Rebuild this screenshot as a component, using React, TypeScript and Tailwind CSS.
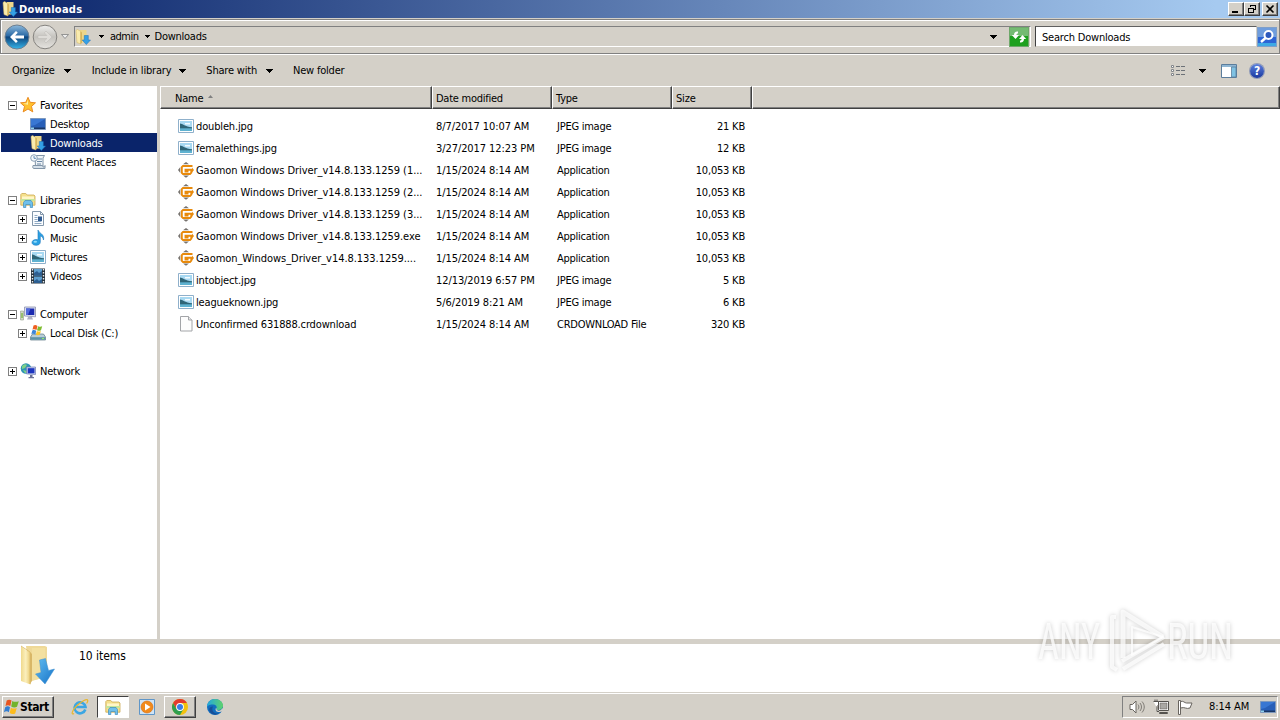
import type { ReactNode } from "react";

interface IconProps {
  className?: string;
}

function DownloadFolderIcon({ className = "w-4 h-4" }: IconProps) {
  return (
    <svg viewBox="0 0 16 16" className={className}>
      <path d="M5 1h6.500v12.500H5z" fill="#edd68a" />
      <path d="M1 1.500 2.500.5 6 2.600V15L2 13.600z" fill="#f9ebae" stroke="#dbb95c" strokeWidth=".5" />
      <path d="M5.400 2.600V15l1.400-1.200V3.400z" fill="#d4ae52" />
      <path d="M9.300 6.500h4v4.500h2.200L11.300 15.600 7.200 11h2.100z" fill="#35a0e6" stroke="#1b6fb5" strokeWidth=".5" />
    </svg>
  );
}

function LargeFolderIcon({ className }: IconProps) {
  return (
    <svg viewBox="0 0 36 44" className={className}>
      <defs>
        <linearGradient id="lf" x1="0" x2="1">
          <stop offset="0" stopColor="#f0d98c" />
          <stop offset=".5" stopColor="#fbefbd" />
          <stop offset="1" stopColor="#e9cb72" />
        </linearGradient>
        <linearGradient id="la" x1="0" x2="1" y2="1">
          <stop offset="0" stopColor="#63bdf0" />
          <stop offset="1" stopColor="#1472c8" />
        </linearGradient>
      </defs>
      <path d="M6 2h19l2 1v30l-17 4z" fill="#efd998" />
      <path d="M12 4h13v29l-13 4z" fill="#f3e0a0" />
      <path d="m1 2 8 7 1.500 31.500L1 37z" fill="url(#lf)" />
      <path d="m1 2 9 6v32" fill="none" stroke="#d8b662" strokeWidth=".8" />
      <path d="M10 8v32l2-3V10z" fill="#d9b767" />
      <path d="m19.500 16 6-1.500 3 12 6-1.500-9.500 15-9.500-10 5.500-1.500z" fill="url(#la)" stroke="#3c8fd0" strokeWidth=".5" />
    </svg>
  );
}

function BackIcon() {
  return (
    <svg viewBox="0 0 26 26" className="w-[26px] h-[26px]">
      <defs>
        <linearGradient id="bk" x2="0" y2="1">
          <stop offset="0" stopColor="#8db9dc" />
          <stop offset=".45" stopColor="#2b6aa5" />
          <stop offset=".5" stopColor="#0e447c" />
          <stop offset="1" stopColor="#35b5ea" />
        </linearGradient>
      </defs>
      <circle cx="13" cy="13" r="12" fill="url(#bk)" stroke="#6d7f90" />
      <path d="m6 13 6-6 1.800 1.800-2.700 2.700H20v3h-8.900l2.700 2.700L12 19z" fill="#fff" />
    </svg>
  );
}

function ForwardIcon() {
  return (
    <svg viewBox="0 0 26 26" className="w-[26px] h-[26px]">
      <defs>
        <linearGradient id="fw" x2="0" y2="1">
          <stop offset="0" stopColor="#efefed" />
          <stop offset=".5" stopColor="#c4c2bd" />
          <stop offset="1" stopColor="#e6e4e0" />
        </linearGradient>
      </defs>
      <circle cx="13" cy="13" r="11.800" fill="url(#fw)" stroke="#85837f" />
      <path d="m20 13-6-6-1.800 1.800 2.700 2.700H6v3h8.900l-2.700 2.700L14 19z" fill="#dedcd8" stroke="#bbb9b4" strokeWidth=".5" />
    </svg>
  );
}

function RefreshIcon() {
  return (
    <svg viewBox="0 0 20 20" className="w-5 h-5">
      <path d="M0 0h20v20H0z" fill="#6da86a" />
      <path d="M1 1h18v8H1z" fill="#74bb72" />
      <path d="M1 9h18v10H1z" fill="#1fa01f" />
      <path d="M9 4.500C6.500 4.200 5 5.500 5 8H2.800l3.700 4L10 8H7.500c0-1.200.5-1.600 1.500-1.600zM11 15.500c2.500.3 4-1 4-3.500h2.200l-3.700-4L10 12h2.500c0 1.200-.5 1.600-1.500 1.600z" fill="#fff" />
    </svg>
  );
}

function SearchIcon() {
  return (
    <svg viewBox="0 0 20 20" className="w-5 h-5">
      <path d="M0 0h20v20H0z" fill="#7f9fc9" />
      <path d="M1 1h18v9H1z" fill="#6f9ddd" />
      <path d="M1 10h18v9H1z" fill="#2d64d5" />
      <path d="M1 16h18v3H1z" fill="#3fa9e4" />
      <circle cx="11.500" cy="8" r="4" fill="#2d59bd" stroke="#fff" strokeWidth="2" />
      <path d="m8.500 11-4.500 4" stroke="#fff" strokeWidth="2.500" />
    </svg>
  );
}

function StarIcon() {
  return (
    <svg viewBox="0 0 16 16" className="w-4 h-4">
      <path d="m8 .3 2.200 5 5.300.5-4 3.600 1.300 5.500L8 12l-4.800 2.900 1.300-5.500-4-3.600 5.300-.5z" fill="#ffc02e" stroke="#e8851b" strokeWidth=".9" />
      <path d="M8 2.700 6.700 6.300 3 6.700l5 1z" fill="#fff0a6" />
    </svg>
  );
}

function DesktopIcon() {
  return (
    <svg viewBox="0 0 16 16" className="w-4 h-4">
      <path d="M.5 2.500h15v11H.5z" fill="#285fb8" stroke="#7d98bd" />
      <path d="M1 3h14L5 9 1 10z" fill="#3977d3" />
      <path d="M1 11.500h14V13H1z" fill="#183665" />
      <path d="M1 11.500h3V13H1z" fill="#8fd0ee" />
    </svg>
  );
}

function RecentIcon() {
  return (
    <svg viewBox="0 0 16 16" className="w-4 h-4">
      <path d="M5 1.500h9.500L13 4v9H5.500z" fill="#eef3f7" stroke="#8295a8" />
      <path d="M7 5h5M7 7.500h5M7 10h4" stroke="#6d89a6" />
      <path d="M3 11.500h9.500c0 2 2.500 2 2.500 0v3H4c-1.500 0-1.500-2-1-3z" fill="#d6e0e9" stroke="#8295a8" />
      <circle cx="4" cy="4" r="3.300" fill="#f5f8fb" stroke="#8ca1b6" />
      <path d="M4 2v2.300h2" fill="none" stroke="#3f74a6" strokeWidth=".8" />
    </svg>
  );
}

function LibraryIcon({ className = "w-4 h-4" }: IconProps) {
  return (
    <svg viewBox="0 0 16 16" className={className}>
      <path d="M.8 13.200V2.500l1-1h4l1.400 1.500H14l1 1v9.200z" fill="#f5e08c" stroke="#cdab55" strokeWidth=".8" />
      <path d="M2 4.500h12v3H2z" fill="#fff6c8" />
      <path d="M1 7h14v2H1z" fill="#c5e59a" />
      <path d="M3.500 15.500v-5l1.500-2h6l1.500 2v5h-2.300v-3H5.800v3z" fill="#6fc0ec" stroke="#3f8dbf" strokeWidth=".7" />
    </svg>
  );
}

function DocumentIcon() {
  return (
    <svg viewBox="0 0 16 16" className="w-4 h-4">
      <path d="M2.500.5h8l3 3v11h-11z" fill="#fbfdff" stroke="#8397ab" />
      <path d="M10.500.5v3h3" fill="none" stroke="#8397ab" />
      <path d="M4.500 4.500h3M4.500 6.500h3M4.500 8.500h3M4.500 10.500h7M4.500 12.500h7" stroke="#8fa9c3" />
      <path d="M8 5.500h4V10H8z" fill="#305b91" />
    </svg>
  );
}

function MusicIcon() {
  return (
    <svg viewBox="0 0 16 16" className="w-4 h-4">
      <path d="M8 0c.5 3 7 4 5.500 10C13 7 11.500 6 10.300 6v6c0 2-1.700 3.300-4.200 3.300S2 14.200 2 12.500s1.800-3 4-3c.8 0 1.400.2 2 .4z" fill="#2ca1e3" stroke="#1d78bd" strokeWidth=".6" />
      <ellipse cx="5.300" cy="11.700" rx="1.800" ry="1" fill="#91dcfa" />
    </svg>
  );
}

function PictureIcon() {
  return (
    <svg viewBox="0 0 16 16" className="w-4 h-4">
      <path d="M.5 1.500h15v13H.5z" fill="#fff" stroke="#8fb0cb" />
      <path d="M2 3h12v10H2z" fill="#a8d9f2" />
      <path d="M2 5.500c2.500 0 5 3.200 12 3.800V11H2z" fill="#2f6577" />
      <path d="M2 10.300h12V13H2z" fill="#5fb2d0" />
      <path d="M7 5h5v1.500H7z" fill="#f3fbff" />
    </svg>
  );
}

function VideoIcon() {
  return (
    <svg viewBox="0 0 16 16" className="w-4 h-4">
      <path d="M1 .5h14v15H1z" fill="#26323c" />
      <path d="M4 1h8v6.500H4zM4 8.500h8V15H4z" fill="#5d9fd0" />
      <path d="m4 5 3-2 2 2 3-2v4.500H4zM4 13l3-2 2 2 3-2v4H4z" fill="#2c5e91" />
      <path d="M2.500 1v14M13.500 1v14" stroke="#e9eef2" strokeWidth="1.400" strokeDasharray="1.500 1.500" />
    </svg>
  );
}

function ComputerIcon() {
  return (
    <svg viewBox="0 0 16 16" className="w-4 h-4">
      <path d="M.5 5h3v9h-3z" fill="#d0d8c4" stroke="#94a08c" strokeWidth=".6" />
      <path d="M1.300 7h1.400v5H1.300z" fill="#80b74a" />
      <path d="M4.500 1h11v9.800l-11-.8z" fill="#dbdff0" stroke="#8c91ac" strokeWidth=".8" />
      <path d="M6 2.500h8.300V9H6z" fill="#1a2ab0" />
      <path d="M6 2.500h4.500L8 9H6z" fill="#5068dc" />
      <path d="M8 11h4l1 2.500H7z" fill="#aeb0c4" />
    </svg>
  );
}

function DriveIcon() {
  return (
    <svg viewBox="0 0 16 16" className="w-4 h-4">
      <path d="M2.500 9h11l2 3v3H.5v-3z" fill="#b8cdd7" stroke="#5c7784" strokeWidth=".7" />
      <path d="M.8 12.200h14.400v2.500H.8z" fill="#5e93a6" />
      <path d="M12 13h2v1h-2z" fill="#8ff065" />
      <path d="M3.500.6c1.500-1 2.500-.6 4 .3L6.500 5c-1.500-.8-2.500-1-4-.3z" fill="#ef6022" />
      <path d="M8.200 1.200c1.500.7 2.500.8 4 .1L11 5.300c-1.500.7-2.500.7-4 0z" fill="#7fbd30" />
      <path d="M2.300 5.500c1.500-.8 2.500-.5 4 .3l-1 3.700c-1.500-.8-2.500-1-4-.3z" fill="#3c86d8" />
      <path d="M6.900 6c1.500.8 2.500.8 4 .1l-1.200 3.700c-1.500.7-2.300.6-3.800 0z" fill="#fdc421" />
    </svg>
  );
}

function NetworkIcon() {
  return (
    <svg viewBox="0 0 16 16" className="w-4 h-4">
      <circle cx="6" cy="5.500" r="5.300" fill="#2e93b4" />
      <path d="M2 3c2-2 4-2 5-1L5 5 2 6zM3 7l4 1v2H5z" fill="#7dd188" />
      <path d="M6.500 4h9v7.500l-9-.6z" fill="#c9d1ee" stroke="#6c7ab2" strokeWidth=".7" />
      <path d="M7.700 5.200H14.500V10.300H7.700z" fill="#1c35c0" />
      <path d="M10 12h2.500v2H10zM8.500 14h5.500v1.300H8.500z" fill="#6b7296" />
    </svg>
  );
}

function GaomonIcon() {
  return (
    <svg viewBox="0 0 16 16" className="w-4 h-4">
      <path d="m8 0 3 2.300H5zM8 15.800l3-2.300H5zM0 8l2.300-3v6z" fill="#77736f" />
      <path d="M14.500 4H5L3.800 5.200v5.600L5 12h7l1.300-1.300V7.800H7.500v1.700h3" fill="none" stroke="#e88a0c" strokeWidth="1.900" />
      <path d="m14 5.500 2 2.500-2 2.500z" fill="#e88a0c" />
    </svg>
  );
}

function BlankFileIcon() {
  return (
    <svg viewBox="0 0 16 16" className="w-4 h-4">
      <path d="M2.500.5h8l3.500 3.500v11H2.500z" fill="#fdfdfd" stroke="#a3a5a8" />
      <path d="M10.500.5V4H14" fill="#e8e8e8" stroke="#a3a5a8" />
    </svg>
  );
}

function WindowsFlag() {
  return (
    <svg viewBox="0 0 16 16" className="w-[17px] h-4 shrink-0">
      <path d="M3.200 1.500c1.800-1.200 3.500-1 4.800 0L6.800 7C5.400 6 3.600 6 2 7z" fill="#e8551f" />
      <path d="M8.800 2c1.600 1 4 1.200 6.500.2L13.500 7.800c-1.800 1-4.200.7-5.800-.3z" fill="#72b32b" />
      <path d="M1.700 8.200c1.800-1.200 3.500-1 4.800 0l-1.200 5C4 12 2 12.200.4 13.200z" fill="#337ed1" />
      <path d="M7.400 8.700c1.600 1 3.800 1.200 5.800.2l-1.500 5.500c-1.800 1-4 .8-5.500-.3z" fill="#fcbc1d" />
    </svg>
  );
}

function IeIcon() {
  return (
    <svg viewBox="0 0 18 18" className="w-[18px] h-[18px]">
      <path d="M14.300 11.500A5.500 5.500 0 1 1 14.500 9H5" fill="none" stroke="#3ba6e3" strokeWidth="2.600" />
      <path d="M3 15.500c-3 2-2.500-2.500 2.500-7.500s11-8 11.300-5.500c.1 1-.5 2-1.200 3" fill="none" stroke="#e9b72c" strokeWidth="1.200" />
    </svg>
  );
}

function PlayerIcon() {
  return (
    <svg viewBox="0 0 16 16" className="w-4 h-4">
      <path d="M.5.5h15v15H.5z" fill="#cfe4f6" stroke="#5f96c8" />
      <circle cx="8" cy="8" r="6" fill="#f18a1c" stroke="#d96c0b" strokeWidth=".6" />
      <path d="M6 4.500 11.500 8 6 11.500z" fill="#fff" />
    </svg>
  );
}

function ChromeIcon() {
  return (
    <svg viewBox="0 0 16 16" className="w-4 h-4">
      <circle cx="8" cy="8" r="8" fill="#f4c20d" />
      <path d="M1.070 4A8 8 0 0 1 14.930 4H8L4.500 10z" fill="#e33b2e" />
      <path d="M1.070 4A8 8 0 0 0 8 16l3.500-6H4.500z" fill="#2f9e4f" />
      <circle cx="8" cy="8" r="3.900" fill="#fff" />
      <circle cx="8" cy="8" r="3" fill="#3a7de8" />
    </svg>
  );
}

function EdgeIcon() {
  return (
    <svg viewBox="0 0 16 16" className="w-4 h-4">
      <defs>
        <linearGradient id="eg" x1="0" x2="1">
          <stop offset="0" stopColor="#22a7df" />
          <stop offset="1" stopColor="#5fd36b" />
        </linearGradient>
      </defs>
      <circle cx="8" cy="8" r="8" fill="#126dbf" />
      <path d="M0 8C0 3.500 3.500 0 8 0s8 3.200 8 6.500S13.500 11 11 11c-1.500 0-2-.7-1.500-1.500S10 6 6.500 5.500 0 7 0 8z" fill="url(#eg)" />
      <path d="M9.500 9.500C9 11 11 12 13 11.500l3-2.500v3l-3 1c-3 .5-5.500-1.500-4-4z" fill="#d4d0c8" />
      <path d="M6 7.500c-2 3.500.5 7.500 6 7-4 2.500-8.500.5-9.500-2.500S3.500 7.500 6 7.500z" fill="#174f98" />
    </svg>
  );
}

function ViewIcon() {
  return (
    <svg viewBox="0 0 16 14" className="w-4 h-3.5">
      <path d="M1.500 1.500h2v2h-2zM1.500 5.500h2v2h-2zM1.500 9.500h2v2h-2z" fill="#fff" stroke="#82868b" />
      <path d="M6 2.500h4M11 2.500h4M6 6.500h4M11 6.500h4M6 10.500h4M11 10.500h4" stroke="#6c7177" />
    </svg>
  );
}

function PaneIcon() {
  return (
    <svg viewBox="0 0 16 14" className="w-4 h-3.5">
      <path d="M.5.5h15v13H.5z" fill="#fff" stroke="#5b7d9c" />
      <path d="M1 1h14v2H1z" fill="#8fb6d3" />
      <path d="M10.500 3h4.500v10h-4.500z" fill="#7fc2e3" stroke="#5b7d9c" strokeWidth=".8" />
    </svg>
  );
}

function HelpIcon() {
  return (
    <span className="w-3.5 h-3.5 mx-px rounded-full bg-linear-to-b from-[#5d7fdd] to-[#1b389f] ring-1 ring-[#8f9ab8] text-white text-[12px] font-bold flex items-center justify-center">
      ?
    </span>
  );
}

function Arrow({ className = "w-[7px] h-1" }: IconProps) {
  return (
    <svg viewBox="0 0 7 4" className={`shrink-0 ${className}`} shapeRendering="crispEdges">
      <path d="M0 0h7L3.500 4z" />
    </svg>
  );
}

function Watermark() {
  return (
    <div className="absolute left-[1030px] top-[600px] w-[220px] h-20 pointer-events-none">
      <svg viewBox="0 0 220 80" className="w-full h-full drop-shadow-[0_0_2px_#00000040]">
        <g fill="none" stroke="#ffffff" strokeOpacity=".75" strokeLinejoin="round">
          <path d="M86 17h-4v50l5 3" strokeWidth="4" />
          <path d="M93 58V12l40 25" strokeWidth="5" />
          <path d="M102 27v28l31-18z" strokeWidth="2" />
          <path d="m92 61 42-24M93 69l41-25" strokeWidth="4" />
        </g>
        <g fill="#ffffff" fillOpacity=".78" fontFamily="Roboto, sans-serif" fontSize="50">
          <text x="8" y="59" textLength="62" lengthAdjust="spacingAndGlyphs">ANY</text>
          <text x="137" y="59" textLength="66" lengthAdjust="spacingAndGlyphs">RUN</text>
        </g>
      </svg>
    </div>
  );
}

interface TreeItemProps {
  icon: ReactNode;
  label: string;
  toggle?: "plus" | "minus";
  child?: boolean;
  selected?: boolean;
}

function TreeItem({ icon, label, toggle, child, selected }: TreeItemProps) {
  return (
    <div
      className={`h-[19px] ml-px flex items-center ${child ? "pl-[17px]" : "pl-[7px]"} ${
        selected ? "bg-[#0a246a] text-white" : ""
      }`}
    >
      <span className="w-[9px] h-[9px] mr-[3px] shrink-0">
        {toggle && (
          <svg viewBox="0 0 9 9" className="w-[9px] h-[9px] mt-px" shapeRendering="crispEdges">
            <path d="M.5.5h8v8h-8z" fill="#fff" stroke="#808080" />
            <path d={toggle === "plus" ? "M2 4.500h5M4.500 2v5" : "M2 4.500h5"} stroke="#000" />
          </svg>
        )}
      </span>
      {icon}
      <span className="ml-1 pt-[2px]">{label}</span>
    </div>
  );
}

type FileKind = "image" | "app" | "blank";

interface FileRow {
  name: string;
  date: string;
  type: string;
  size: string;
  kind: FileKind;
}

const files: FileRow[] = [
  { name: "doubleh.jpg", date: "8/7/2017 10:07 AM", type: "JPEG image", size: "21 KB", kind: "image" },
  { name: "femalethings.jpg", date: "3/27/2017 12:23 PM", type: "JPEG image", size: "12 KB", kind: "image" },
  { name: "Gaomon Windows Driver_v14.8.133.1259 (1...", date: "1/15/2024 8:14 AM", type: "Application", size: "10,053 KB", kind: "app" },
  { name: "Gaomon Windows Driver_v14.8.133.1259 (2...", date: "1/15/2024 8:14 AM", type: "Application", size: "10,053 KB", kind: "app" },
  { name: "Gaomon Windows Driver_v14.8.133.1259 (3...", date: "1/15/2024 8:14 AM", type: "Application", size: "10,053 KB", kind: "app" },
  { name: "Gaomon Windows Driver_v14.8.133.1259.exe", date: "1/15/2024 8:14 AM", type: "Application", size: "10,053 KB", kind: "app" },
  { name: "Gaomon_Windows_Driver_v14.8.133.1259....", date: "1/15/2024 8:14 AM", type: "Application", size: "10,053 KB", kind: "app" },
  { name: "intobject.jpg", date: "12/13/2019 6:57 PM", type: "JPEG image", size: "5 KB", kind: "image" },
  { name: "leagueknown.jpg", date: "5/6/2019 8:21 AM", type: "JPEG image", size: "6 KB", kind: "image" },
  { name: "Unconfirmed 631888.crdownload", date: "1/15/2024 8:14 AM", type: "CRDOWNLOAD File", size: "320 KB", kind: "blank" },
];

const fileIcons: Record<FileKind, ReactNode> = {
  image: <PictureIcon />,
  app: <GaomonIcon />,
  blank: <BlankFileIcon />,
};

function HeaderCell({ className, children }: { className: string; children?: ReactNode }) {
  return (
    <div
      className={`h-full pt-[2px] flex items-center border-t border-l border-t-white border-l-white border-r border-b border-r-[#404040] border-b-[#404040] shadow-[inset_-1px_-1px_0_#808080] ${className}`}
    >
      {children}
    </div>
  );
}

function WindowButton({ children }: { children: ReactNode }) {
  return (
    <button
      type="button"
      className="w-4 h-3.5 bg-[#d4d0c8] border border-t-white border-l-white border-r-[#404040] border-b-[#404040] shadow-[inset_-1px_-1px_0_#808080] flex items-center justify-center"
    >
      <svg viewBox="0 0 12 10" className="w-3 h-2.5 shrink-0" fill="none" stroke="#000" shapeRendering="crispEdges">
        {children}
      </svg>
    </button>
  );
}

export default function App() {
  return (
    <div className="relative w-[1280px] h-[720px] overflow-hidden flex flex-col bg-[#d4d0c8] text-black text-[11px] leading-[14px] whitespace-nowrap font-['DejaVu_Sans_Condensed','DejaVu_Sans',sans-serif] [font-stretch:condensed] tracking-[-0.2px]">
      {/* Title bar */}
      <div className="h-[18px] shrink-0 flex items-center pl-0.5 pr-0.5 bg-linear-to-r/srgb from-[#0a246a] to-[#a6caf0] to-95% text-white">
        <DownloadFolderIcon />
        <span className="ml-px pt-px font-bold flex-1 tracking-[0.25px]">Downloads</span>
        <WindowButton>
          <path d="M2 8h6" strokeWidth="2" />
        </WindowButton>
        <WindowButton>
          <path d="M4 1.500h6M4.500 1v2M9.500 1v5M8 5.500h2M2 4h6M2.500 4v5M7.500 4v5M2 8.500h6" />
        </WindowButton>
        <span className="w-0.5" />
        <WindowButton>
          <path d="m2.500 1.500 7 7M9.500 1.500l-7 7" strokeWidth="1.600" shapeRendering="auto" />
        </WindowButton>
      </div>

      {/* Address bar */}
      <div className="h-[35px] mt-px shrink-0 border border-[#808080] shadow-[inset_1px_1px_0_#fff,0_1px_0_#fff] flex items-center pl-[3px] pr-px">
        <BackIcon />
        <span className="ml-0.5">
          <ForwardIcon />
        </span>
        <svg viewBox="0 0 8 5" className="ml-[3px] w-2 h-[5px]">
          <path d="M.5.5h7L4 4.500z" fill="#eee" stroke="#808080" strokeWidth=".8" />
        </svg>
        <div className="ml-[5px] w-[957px] h-[21px] flex items-center border-t border-l border-[#808080] border-b border-b-white border-r border-r-white">
          <DownloadFolderIcon />
          <Arrow className="w-[5px] h-[3px] ml-[8px]" />
          <span className="ml-[6px] tracking-[-0.5px]">admin</span>
          <Arrow className="w-[5px] h-[3px] ml-1.5" />
          <span className="ml-[5px] flex-1 tracking-[-0.25px]">Downloads</span>
          <Arrow className="w-[7px] h-1 mr-[33px]" />
        </div>
        <div className="-ml-[22px]">
          <RefreshIcon />
        </div>
        <div className="ml-1.5 w-[222px] h-[21px] bg-white border border-t-[#606060] border-l-[#404040] border-r-[#d4d0c8] border-b-[#d4d0c8] flex items-center pl-1.5 pt-[2px] tracking-[-0.2px]">
          Search Downloads
        </div>
        <SearchIcon />
      </div>

      {/* Command bar */}
      <div className="h-8 shrink-0 flex items-center pl-3 pr-[15px] pt-px">
        <span>Organize</span>
        <Arrow className="w-[7px] h-1 ml-[9px]" />
        <span className="ml-[21px]">Include in library</span>
        <Arrow className="w-[7px] h-1 ml-2" />
        <span className="ml-5">Share with</span>
        <Arrow className="w-[7px] h-1 ml-[9px]" />
        <span className="ml-5 flex-1">New folder</span>
        <ViewIcon />
        <Arrow className="w-[7px] h-1 ml-[13px] mr-[15px]" />
        <PaneIcon />
        <span className="w-3" />
        <HelpIcon />
      </div>

      <div className="h-[553px] shrink-0 flex">
        {/* Navigation tree */}
        <div className="w-[157px] bg-white pt-[9px] flex flex-col gap-[19px]">
          <div>
            <TreeItem toggle="minus" icon={<StarIcon />} label="Favorites" />
            <TreeItem child icon={<DesktopIcon />} label="Desktop" />
            <TreeItem child selected icon={<DownloadFolderIcon />} label="Downloads" />
            <TreeItem child icon={<RecentIcon />} label="Recent Places" />
          </div>
          <div>
            <TreeItem toggle="minus" icon={<LibraryIcon />} label="Libraries" />
            <TreeItem child toggle="plus" icon={<DocumentIcon />} label="Documents" />
            <TreeItem child toggle="plus" icon={<MusicIcon />} label="Music" />
            <TreeItem child toggle="plus" icon={<PictureIcon />} label="Pictures" />
            <TreeItem child toggle="plus" icon={<VideoIcon />} label="Videos" />
          </div>
          <div>
            <TreeItem toggle="minus" icon={<ComputerIcon />} label="Computer" />
            <TreeItem child toggle="plus" icon={<DriveIcon />} label="Local Disk (C:)" />
          </div>
          <TreeItem toggle="plus" icon={<NetworkIcon />} label="Network" />
        </div>

        {/* File list */}
        <div className="ml-[3px] flex-1 bg-white">
          <div className="h-[23px] bg-[#d4d0c8] flex">
            <HeaderCell className="w-[272px] pl-3.5">
              Name
              <svg viewBox="0 0 5 3" className="ml-[5px] mb-1 w-[5px] h-[3px]">
                <path d="M0 3h5L2.500 0z" fill="#808080" />
              </svg>
            </HeaderCell>
            <HeaderCell className="w-[120px] pl-[3px] tracking-[-0.25px]">Date modified</HeaderCell>
            <HeaderCell className="w-[120px] pl-[3px]">Type</HeaderCell>
            <HeaderCell className="w-20 pl-[3px]">Size</HeaderCell>
            <HeaderCell className="flex-1" />
          </div>
          <div className="pt-1.5">
            {files.map((file) => (
              <div key={file.name} className="h-[22px] flex items-center pl-[18px]">
                {fileIcons[file.kind]}
                <span className={`ml-0.5 w-[240px] pt-[2px] ${file.kind === "app" ? "tracking-[-0.05px]" : "tracking-[-0.15px]"}`}>
                  {file.name}
                </span>
                <span className="w-[120px] pt-[2px] tracking-[-0.08px]">{file.date}</span>
                <span className="w-[120px] pt-[2px] pl-px tracking-[-0.25px]">{file.type}</span>
                <span className="w-[69px] pt-[2px] text-right">{file.size}</span>
              </div>
            ))}
          </div>
        </div>
      </div>

      {/* Details pane */}
      <div className="h-12 mt-[5px] shrink-0 bg-white flex pl-5">
        <LargeFolderIcon className="w-9 h-11" />
        <span className="ml-[23px] mt-1 text-[12px] leading-4 tracking-[-0.05px]">10 items</span>
      </div>

      {/* Taskbar */}
      <div className="flex-1 border-t border-[#d4d0c8] shadow-[inset_0_1px_0_#fff] flex items-center pl-0.5">
        <button
          type="button"
          className="w-[52px] h-[22px] border border-t-white border-l-white border-r-[#404040] border-b-[#404040] shadow-[inset_-1px_-1px_0_#808080] flex items-center font-bold text-[12px] tracking-[-0.4px]"
        >
          <WindowsFlag />
          Start
        </button>
        <span className="ml-[17px]">
          <IeIcon />
        </span>
        <div className="ml-2 w-8 h-[22px] bg-white border border-t-[#404040] border-l-[#404040] border-r-white border-b-white flex items-center justify-center">
          <LibraryIcon />
        </div>
        <span className="ml-2.5">
          <PlayerIcon />
        </span>
        <div className="ml-[9px] w-8 h-[22px] border border-t-white border-l-white border-r-[#404040] border-b-[#404040] shadow-[inset_-1px_-1px_0_#808080] flex items-center justify-center">
          <ChromeIcon />
        </div>
        <span className="ml-[11px] flex-1">
          <EdgeIcon />
        </span>
        <div className="w-[156px] h-[22px] mr-0.5 border border-t-[#808080] border-l-[#808080] border-r-white border-b-white flex items-center pl-1.5">
          <svg viewBox="0 0 16 16" className="w-4 h-4" stroke="#68645f" fill="none">
            <path d="M1 5.500h2.500L7 2v12l-3.500-3.500H1z" fill="#fff" />
            <path d="M9 5.500c1.200 1.500 1.200 3.500 0 5M11 4c2 2.500 2 5.500 0 8M13 2.500c3 3.500 3 7.500 0 11" strokeWidth=".8" />
          </svg>
          <svg viewBox="0 0 16 16" className="ml-2 w-4 h-4" stroke="#55524e" fill="#fff">
            <path d="M5.500 2.500h10v9h-10z" />
            <path d="M7 4h7v6H7z" fill="#aaa8a4" strokeWidth=".5" />
            <path d="M6.500 13.500h8v1h-8z" />
            <path d="M.5 2.500h5V6L4 7.500V12.500H6" />
            <path d="M2 .5v2M4 .5v2" />
          </svg>
          <svg viewBox="0 0 16 16" className="ml-2 w-4 h-4" stroke="#68645f" fill="#fff">
            <path d="M1.500 1.500h2v14h-2z" />
            <path d="M3.500 2.500c3-1 4 1.500 6 1.500h5.500l-2 5c-4 1.500-5-1.500-9.500 0z" />
          </svg>
          <span className="ml-4 pt-px flex-1 tracking-[-0.05px]">8:14 AM</span>
          <span className="mr-px">
            <DesktopIcon />
          </span>
        </div>
      </div>

      <Watermark />
    </div>
  );
}
